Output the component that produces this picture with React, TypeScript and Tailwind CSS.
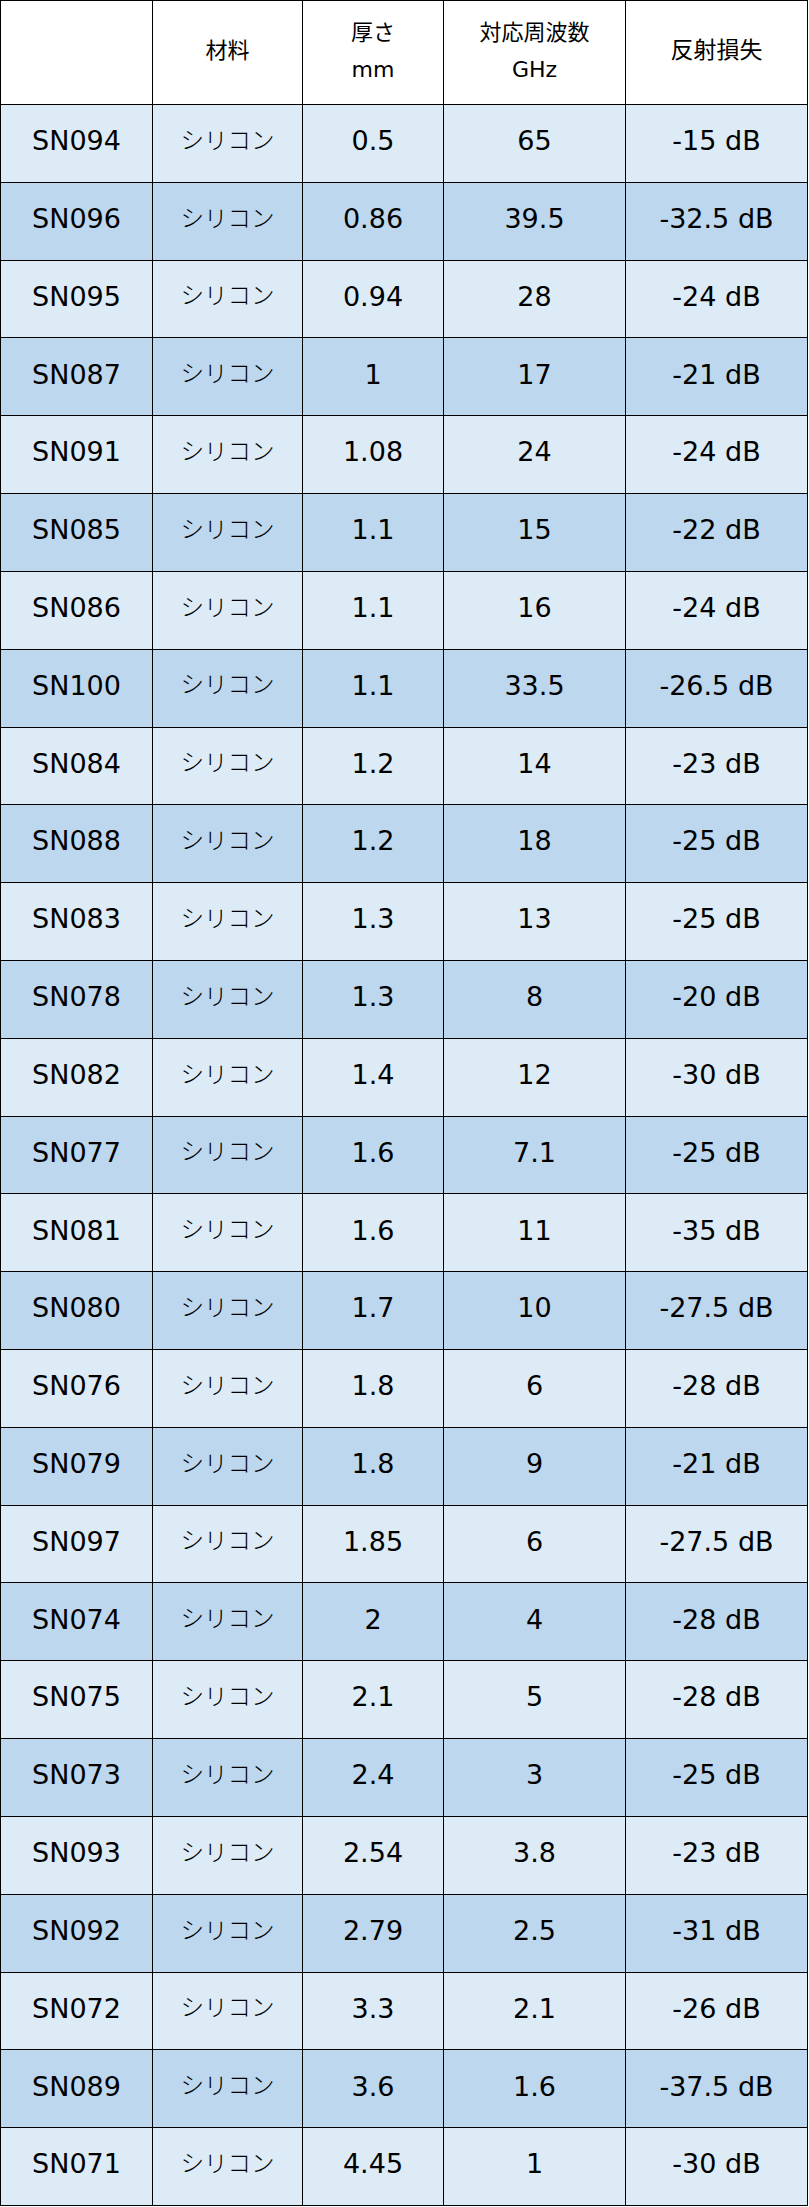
const rows: [string, string, string, string][] = [
  ["SN094", "0.5", "65", "-15 dB"],
  ["SN096", "0.86", "39.5", "-32.5 dB"],
  ["SN095", "0.94", "28", "-24 dB"],
  ["SN087", "1", "17", "-21 dB"],
  ["SN091", "1.08", "24", "-24 dB"],
  ["SN085", "1.1", "15", "-22 dB"],
  ["SN086", "1.1", "16", "-24 dB"],
  ["SN100", "1.1", "33.5", "-26.5 dB"],
  ["SN084", "1.2", "14", "-23 dB"],
  ["SN088", "1.2", "18", "-25 dB"],
  ["SN083", "1.3", "13", "-25 dB"],
  ["SN078", "1.3", "8", "-20 dB"],
  ["SN082", "1.4", "12", "-30 dB"],
  ["SN077", "1.6", "7.1", "-25 dB"],
  ["SN081", "1.6", "11", "-35 dB"],
  ["SN080", "1.7", "10", "-27.5 dB"],
  ["SN076", "1.8", "6", "-28 dB"],
  ["SN079", "1.8", "9", "-21 dB"],
  ["SN097", "1.85", "6", "-27.5 dB"],
  ["SN074", "2", "4", "-28 dB"],
  ["SN075", "2.1", "5", "-28 dB"],
  ["SN073", "2.4", "3", "-25 dB"],
  ["SN093", "2.54", "3.8", "-23 dB"],
  ["SN092", "2.79", "2.5", "-31 dB"],
  ["SN072", "3.3", "2.1", "-26 dB"],
  ["SN089", "3.6", "1.6", "-37.5 dB"],
  ["SN071", "4.45", "1", "-30 dB"],
];

const head = "bg-white flex flex-col items-center justify-center text-[22px] leading-[37px] pb-1";

export default function App() {
  return (
    <div className="bg-white w-[809px] text-black font-['DejaVu_Sans','Noto_Sans_CJK_JP',sans-serif]">
      <div className="w-[808px] h-[2206px] bg-black p-px gap-px grid grid-cols-[151px_149px_140px_181px_181px] grid-rows-[103px_repeat(27,minmax(0,1fr))]">
        <div className={head} />
        <div className={head}>材料</div>
        <div className={head}>
          <span>厚さ</span>
          <span>mm</span>
        </div>
        <div className={head}>
          <span>対応周波数</span>
          <span>GHz</span>
        </div>
        <div className={`${head} text-[23px]`}>反射損失</div>

        {rows.map(([id, mm, ghz, db], i) => {
          const bg = i % 2 === 0 ? "bg-[#ddebf7]" : "bg-[#bdd7ee]";
          const cell = `${bg} flex items-center justify-center pb-1 text-[27px]`;
          return [
            <div key={id + "a"} className={cell}>{id}</div>,
            <div key={id + "b"} className={`${bg} flex items-center justify-center pb-1 text-[23.5px] font-light`}>シリコン</div>,
            <div key={id + "c"} className={cell}>{mm}</div>,
            <div key={id + "d"} className={cell}>{ghz}</div>,
            <div key={id + "e"} className={cell}>{db}</div>,
          ];
        })}
      </div>
    </div>
  );
}
